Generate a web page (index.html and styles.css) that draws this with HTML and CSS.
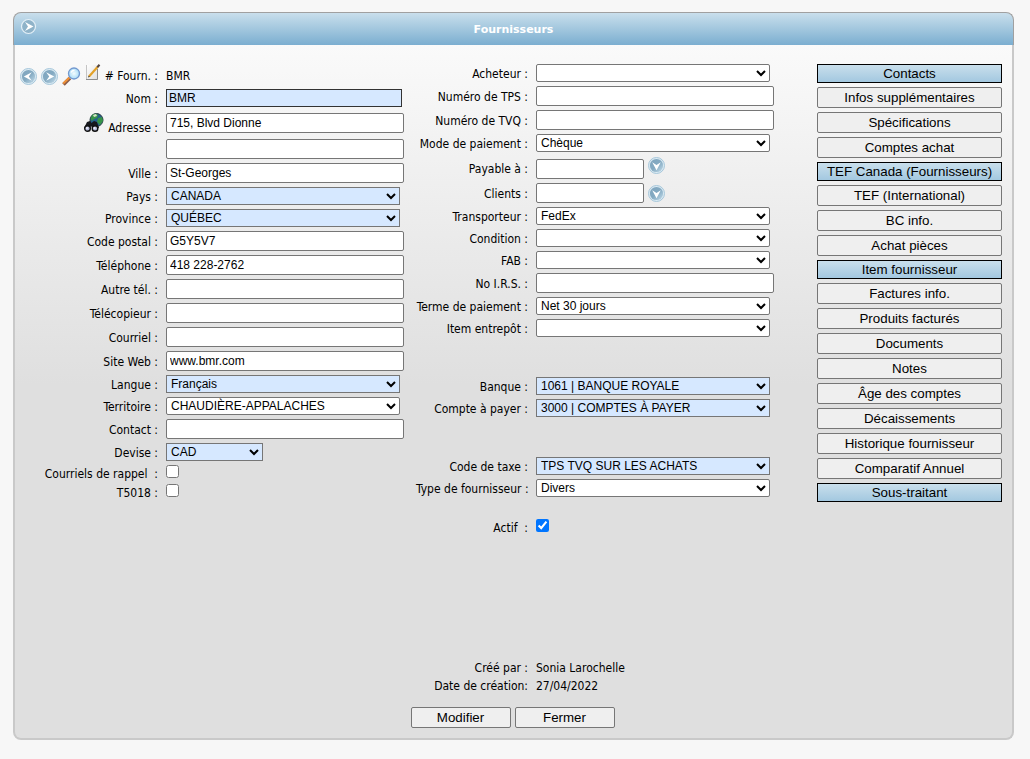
FILE: index.html
```html
<!DOCTYPE html>
<html lang="fr">
<head>
<meta charset="utf-8">
<title>Fournisseurs</title>
<link rel="stylesheet" href="styles.css">
</head>
<body>
<svg class="defs" aria-hidden="true">
  <defs>
    <linearGradient id="disc" x1="0" y1="0" x2="1" y2="1">
      <stop offset="0" stop-color="#7fa5be"/><stop offset="0.5" stop-color="#84aac2"/><stop offset="1" stop-color="#c3dcea"/>
    </linearGradient>
    <linearGradient id="paper" x1="0" y1="0" x2="1" y2="1">
      <stop offset="0" stop-color="#ffffff"/><stop offset="1" stop-color="#dedede"/>
    </linearGradient>
    <radialGradient id="lens">
      <stop offset="0" stop-color="#f4fdff"/><stop offset="1" stop-color="#a9dcf8"/>
    </radialGradient>
    <g id="round">
      <circle cx="8.500" cy="8.500" r="8" fill="#dcebf3" stroke="#a5c6da"/>
      <circle cx="8.500" cy="8.500" r="6.600" fill="url(#disc)"/>
    </g>
  </defs>
</svg>
<main class="panel">
  <header class="panel-header">
    <button class="icon-button" type="button" aria-label="Menu">
      <svg width="17" height="17" viewBox="0 0 17 17"><circle cx="8.500" cy="8.500" r="7" fill="#8fb3c9" stroke="#e4f0f7" stroke-width="1.200"/><path d="M5 4 13.500 8.500 5 13 8 8.500Z" fill="#fff"/></svg>
    </button>
    <h1 class="panel-title">Fournisseurs</h1>
  </header>
  <form class="panel-body">
    <div class="columns">
      <section class="fields">
        <div class="row row-number">
          <div class="caption">
            <button class="icon-button" type="button" aria-label="Précédent"><svg width="17" height="17" viewBox="0 0 17 17"><use href="#round"/><path d="M11.800 4.200 3.800 8.500 11.800 12.800 8.800 8.500Z" fill="#fff"/></svg></button>
            <button class="icon-button" type="button" aria-label="Suivant"><svg width="17" height="17" viewBox="0 0 17 17"><use href="#round"/><path d="M5.200 4.200 13.200 8.500 5.200 12.800 8.200 8.500Z" fill="#fff"/></svg></button>
            <button class="icon-button" type="button" aria-label="Rechercher"><svg width="19" height="19" viewBox="0 0 19 19"><path d="M1.500 17.500 8 11" stroke="#8b5d4a" stroke-width="3.600"/><path d="M1.200 16.500 7.500 10.500" stroke="#ef9036" stroke-width="2"/><circle cx="12" cy="6.500" r="5.500" fill="url(#lens)" stroke="#7298cf" stroke-width="1.300"/><path d="M9 5.500Q10 3.300 12.500 3.300" fill="none" stroke="#fff" stroke-width="1.500"/></svg></button>
            <button class="icon-button icon-raised" type="button" aria-label="Nouveau"><svg width="16" height="17" viewBox="0 0 16 17"><path d="M1 1h12v15H1z" fill="url(#paper)"/><path d="M1.500 1V15" fill="none" stroke="#c4c4c4"/><path d="M1 15.500H12.500V5" fill="none" stroke="#8d8d8d"/><path d="M4 12.500 12.500 3" stroke="#e2a129" stroke-width="2.200"/><path d="M12.300 3.200 14.500.800" stroke="#53433b" stroke-width="2"/><path d="M3 13.500 4.800 12.800 3.700 11.700Z" fill="#222"/></svg></button>
            <span># Fourn. :</span>
          </div>
          <span>BMR</span>
        </div>
        <div class="row row-spaced"><label class="caption" for="nom">Nom :</label><input class="text required" id="nom" value="BMR"></div>
        <div class="row row-spaced row-address">
          <div class="caption">
            <button class="icon-button" type="button" aria-label="Localiser"><svg width="20" height="20" viewBox="0 0 20 20"><circle cx="12.500" cy="7" r="6.500" fill="#24608c" stroke="#283740"/><path d="M8 2Q12-.500 14 2L13 5 10 6 8 8 6.500 6ZM14 5l4-1 1 4-3 4-3-3Z" fill="#369448"/><path d="M9 2 12 1 13 3 10 4Z" fill="#d6e4c9"/><path d="M0 15 3 9 6 8 7.500 10 10 8 13 9 15 15 9 16 7 13 6 16Z" fill="#16171c"/><circle cx="3.500" cy="15.500" r="2.800" fill="#b7bddb" stroke="#111" stroke-width="1.400"/><circle cx="11" cy="15.500" r="2.800" fill="#b7bddb" stroke="#111" stroke-width="1.400"/><circle cx="3" cy="15" r="1" fill="#f0f1fb"/><circle cx="10.500" cy="15" r="1" fill="#f0f1fb"/></svg></button>
            <label class="label-low" for="adresse">Adresse :</label>
          </div>
          <input class="text" id="adresse" value="715, Blvd Dionne">
        </div>
        <div class="row"><span></span><input class="text" aria-label="Adresse, suite"></div>
        <div class="row"><label class="caption" for="ville">Ville :</label><input class="text" id="ville" value="St-Georges"></div>
        <div class="row"><label class="caption" for="pays">Pays :</label><select class="list required" id="pays"><option>CANADA</option></select></div>
        <div class="row"><label class="caption" for="province">Province :</label><select class="list required" id="province"><option>QUÉBEC</option></select></div>
        <div class="row"><label class="caption" for="cp">Code postal :</label><input class="text" id="cp" value="G5Y5V7"></div>
        <div class="row"><label class="caption" for="tel">Téléphone :</label><input class="text" id="tel" value="418 228-2762"></div>
        <div class="row"><label class="caption" for="tel2">Autre tél. :</label><input class="text" id="tel2"></div>
        <div class="row"><label class="caption" for="fax">Télécopieur :</label><input class="text" id="fax"></div>
        <div class="row"><label class="caption" for="courriel">Courriel :</label><input class="text" id="courriel"></div>
        <div class="row"><label class="caption" for="web">Site Web :</label><input class="text" id="web" value="www.bmr.com"></div>
        <div class="row"><label class="caption" for="langue">Langue :</label><select class="list required" id="langue"><option>Français</option></select></div>
        <div class="row"><label class="caption" for="territoire">Territoire :</label><select class="list" id="territoire"><option>CHAUDIÈRE-APPALACHES</option></select></div>
        <div class="row"><label class="caption" for="contact">Contact :</label><input class="text" id="contact"></div>
        <div class="row"><label class="caption" for="devise">Devise :</label><select class="list required currency" id="devise"><option>CAD</option></select></div>
        <div class="row row-check"><label class="caption" for="rappel">Courriels de rappel &nbsp;:</label><input class="check" type="checkbox" id="rappel"></div>
        <div class="row row-check"><label class="caption" for="t5018">T5018 :</label><input class="check" type="checkbox" id="t5018"></div>
      </section>
      <section class="fields fields-purchase">
        <div class="row"><label class="caption" for="acheteur">Acheteur :</label><select class="list" id="acheteur"><option></option></select></div>
        <div class="row"><label class="caption" for="tps">Numéro de TPS :</label><input class="text" id="tps"></div>
        <div class="row"><label class="caption" for="tvq">Numéro de TVQ :</label><input class="text" id="tvq"></div>
        <div class="row"><label class="caption" for="mode">Mode de paiement :</label><select class="list" id="mode"><option>Chèque</option></select></div>
        <div class="row row-lookup"><label class="caption" for="payable">Payable à :</label>
          <div class="lookup"><input class="text short" id="payable"><button class="icon-button" type="button" aria-label="Choisir payable à"><svg width="17" height="17" viewBox="0 0 17 17"><use href="#round"/><path d="M4.200 5.200 8.500 13.200 12.800 5.200 8.500 8Z" fill="#fff"/></svg></button></div></div>
        <div class="row"><label class="caption" for="clients">Clients :</label>
          <div class="lookup"><input class="text short" id="clients"><button class="icon-button" type="button" aria-label="Choisir un client"><svg width="17" height="17" viewBox="0 0 17 17"><use href="#round"/><path d="M4.200 5.200 8.500 13.200 12.800 5.200 8.500 8Z" fill="#fff"/></svg></button></div></div>
        <div class="row"><label class="caption" for="transporteur">Transporteur :</label><select class="list" id="transporteur"><option>FedEx</option></select></div>
        <div class="row"><label class="caption" for="condition">Condition :</label><select class="list" id="condition"><option></option></select></div>
        <div class="row"><label class="caption" for="fab">FAB :</label><select class="list" id="fab"><option></option></select></div>
        <div class="row"><label class="caption" for="irs">No I.R.S. :</label><input class="text" id="irs"></div>
        <div class="row"><label class="caption" for="terme">Terme de paiement :</label><select class="list" id="terme"><option>Net 30 jours</option></select></div>
        <div class="row"><label class="caption" for="item">Item entrepôt :</label><select class="list" id="item"><option></option></select></div>
        <div class="row row-group"><label class="caption" for="banque">Banque :</label><select class="list required" id="banque"><option>1061 | BANQUE ROYALE</option></select></div>
        <div class="row"><label class="caption" for="compte">Compte à payer :</label><select class="list required" id="compte"><option>3000 | COMPTES À PAYER</option></select></div>
        <div class="row row-group"><label class="caption" for="taxe">Code de taxe :</label><select class="list required" id="taxe"><option>TPS TVQ SUR LES ACHATS</option></select></div>
        <div class="row"><label class="caption" for="type">Type de fournisseur :</label><select class="list" id="type"><option>Divers</option></select></div>
        <div class="row row-check row-active"><label class="caption" for="actif">Actif &nbsp;:</label><input class="check" type="checkbox" id="actif" checked></div>
        <div class="row row-created"><span class="caption">Créé par :</span><span class="value">Sonia Larochelle</span></div>
        <div class="row row-date"><span class="caption">Date de création:</span><span class="value">27/04/2022</span></div>
      </section>
      <nav class="links" aria-label="Sections">
        <button class="button filled" type="button">Contacts</button>
        <button class="button" type="button">Infos supplémentaires</button>
        <button class="button" type="button">Spécifications</button>
        <button class="button" type="button">Comptes achat</button>
        <button class="button filled" type="button">TEF Canada (Fournisseurs)</button>
        <button class="button" type="button">TEF (International)</button>
        <button class="button" type="button">BC info.</button>
        <button class="button" type="button">Achat pièces</button>
        <button class="button filled" type="button">Item fournisseur</button>
        <button class="button" type="button">Factures info.</button>
        <button class="button" type="button">Produits facturés</button>
        <button class="button" type="button">Documents</button>
        <button class="button" type="button">Notes</button>
        <button class="button" type="button">Âge des comptes</button>
        <button class="button" type="button">Décaissements</button>
        <button class="button" type="button">Historique fournisseur</button>
        <button class="button" type="button">Comparatif Annuel</button>
        <button class="button filled" type="button">Sous-traitant</button>
      </nav>
    </div>
    <div class="actions">
      <button class="button" type="button">Modifier</button>
      <button class="button" type="button">Fermer</button>
    </div>
  </form>
</main>
</body>
</html>
```
FILE: styles.css
```css
* {
  box-sizing: border-box;
}

body {
  margin: 0;
  padding: 12px 16px 19px 13px;
  background: #f7f7f7;
  color: #000;
  font: 12px/18px "DejaVu Sans Condensed", Tahoma, sans-serif;
}

.defs {
  position: absolute;
  width: 0;
  height: 0;
}

.panel-header {
  display: grid;
  grid-template-columns: 17px 1fr 17px;
  align-items: center;
  height: 33px;
  padding: 0 6px 5px;
  border: 1px solid #a0a0a0;
  border-bottom: 0;
  border-radius: 8px 8px 0 0;
  background: linear-gradient(#c9dfec, #7baed0);
}

.panel-title {
  margin: 0;
  padding-top: 6px;
  color: #fff;
  font: bold 11px/18px "DejaVu Sans", Verdana, sans-serif;
  text-align: center;
}

.panel-body {
  padding: 19px 10px 10px 5px;
  border: 2px solid #c9c9c9;
  border-top: 0;
  border-radius: 0 0 8px 8px;
  background: linear-gradient(#fafafa, #dfdfdf 340px);
}

.columns {
  display: grid;
  grid-template-columns: minmax(0, 384fr) minmax(0, 389fr) 185px;
  column-gap: 12px;
}

.fields,
.links {
  display: flex;
  flex-direction: column;
  gap: 4px;
}

.fields-purchase {
  padding-right: 31px;
}

.row {
  display: grid;
  grid-template-columns: minmax(0, 138fr) minmax(0, 238fr);
  column-gap: 8px;
  align-items: center;
}

.fields-purchase .row {
  grid-template-columns: minmax(0, 112fr) minmax(0, 238fr);
}

.caption,
.value {
  height: 18px;
  line-height: 20px;
  white-space: nowrap;
}

.caption {
  text-align: right;
}

div.caption {
  display: flex;
  align-items: center;
  justify-content: flex-end;
  gap: 4px;
  line-height: 18px;
}

.row-number {
  height: 21px;
  padding-top: 3px;
}

.row-spaced {
  margin-bottom: 2px;
}

.label-low {
  padding-top: 10px;
}

.row-group {
  margin-top: 36px;
}

.row-check {
  height: 15px;
}

.row-check .caption {
  line-height: 18px;
}

.row-lookup {
  margin-top: 3px;
}

.row-lookup .caption {
  line-height: 18px;
}

.row-active {
  margin-top: 18px;
}

.row-created {
  margin-top: 120px;
}

.row-date {
  margin-top: -4px;
}

.icon-button {
  display: block;
  flex: none;
  padding: 0;
  border: 0;
  background: none;
}

.icon-button svg {
  display: block;
}

.icon-raised {
  padding-bottom: 7px;
}

.text,
.list {
  min-width: 0;
  margin: 0;
  border: 1px solid #767676;
  border-radius: 2px;
  background-color: #fff;
  color: #000;
  font: 12px/16px "Liberation Sans", Arial, sans-serif;
}

.text {
  width: 100%;
  height: 20px;
  padding: 0 3px;
}

.text.short {
  width: 108px;
}

.list {
  width: calc(100% - 4px);
  height: 18px;
  padding: 0;
}

.list.currency {
  width: 97px;
}

.required {
  border-radius: 0;
  background-color: #d6e8ff;
}

.text.required {
  width: calc(100% - 2px);
  height: 18px;
  padding: 0 2px;
  border-color: #333;
}

.lookup {
  display: flex;
  align-items: center;
  gap: 4px;
  height: 20px;
}

.row-lookup .icon-button {
  padding-bottom: 8px;
}

.check {
  width: 13px;
  height: 13px;
  margin: 0;
  align-self: start;
}

.button {
  height: 21px;
  padding: 0;
  border: 1px solid #767676;
  border-radius: 2px;
  background: #efefef;
  color: #000;
  font-family: "Liberation Sans", Arial, sans-serif;
  line-height: 18px;
  white-space: nowrap;
}

.button.filled {
  height: 19px;
  border-color: #000;
  border-radius: 0;
  background: linear-gradient(#c9dfec, #a3c8e0);
}

.actions {
  display: flex;
  justify-content: center;
  gap: 4px;
  padding: 13px 0 0 3px;
}

.actions .button {
  width: 100px;
}
```
